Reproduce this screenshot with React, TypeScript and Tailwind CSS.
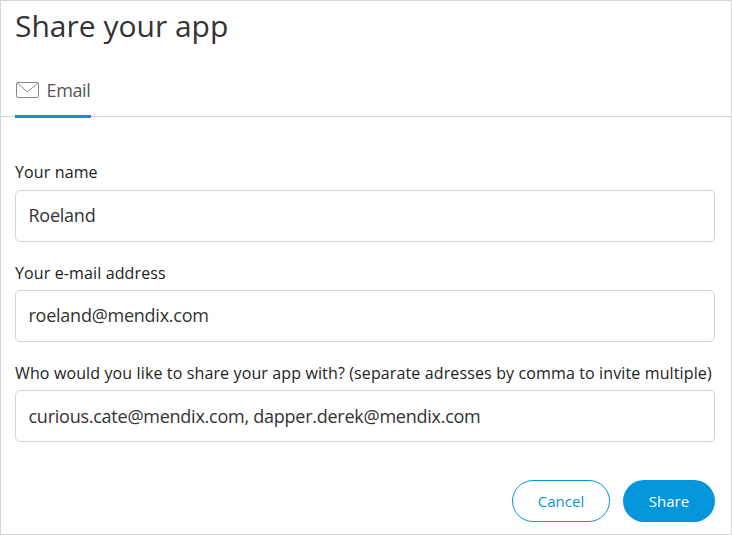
import React from "react";

type FieldProps = { label: string; value: string; spacing: string; boxClass: string };

function Field({ label, value, spacing, boxClass }: FieldProps) {
  return (
    <label className={`block ${spacing}`}>
      <span className="block h-6 whitespace-nowrap text-base leading-6 tracking-[0.128px] text-[#222]">{label}</span>
      <input
        readOnly
        value={value}
        className={`block h-[52px] w-full rounded-[5px] border border-[#d5d5d5] bg-white px-[12.5px] text-[18px] tracking-[-0.25px] text-[#333] outline-none ${boxClass}`}
      />
    </label>
  );
}

export default function App() {
  return (
    <main className="flex h-[535px] w-[732px] flex-col overflow-hidden border border-[#d5d5d5] bg-white font-['Open_Sans',sans-serif]">
      <h1 className="h-[70px] pl-3.5 pt-[5px] text-[30px] leading-[40px] text-[#333]">Share your app</h1>
      <nav className="flex h-[46px] shrink-0 border-b border-[#d5d5d5] pl-3.5">
        <button className="flex h-[47px] w-[76px] items-start gap-[7.5px] border-b-3 border-[#0595db] pl-px pt-[6px] text-[18px] leading-[26px] tracking-[-0.35px] text-[#555]">
          <svg width="23" height="16" viewBox="0 0 23 16" fill="none" stroke="#888" className="mt-[5px] shrink-0">
            <rect x="0.5" y="0.5" width="22" height="15" rx="1.5" />
            <path d="M1.2 1l9.1 8.1Q11.5 10.1 12.7 9.1L21.8 1" />
          </svg>
          <span>Email</span>
        </button>
      </nav>
      <form className="flex flex-col pl-3.5 pr-4">
        <Field label="Your name" value="Roeland" spacing="mt-[43px]" boxClass="mt-[6px] pb-[3px]" />
        <Field label="Your e-mail address" value="roeland@mendix.com" spacing="mt-[19px]" boxClass="mt-[5px] pb-[3px]" />
        <Field
          label="Who would you like to share your app with? (separate adresses by comma to invite multiple)"
          value="curious.cate@mendix.com, dapper.derek@mendix.com"
          spacing="mt-[19px]"
          boxClass="mt-[5px]"
        />
        <div className="mt-[38px] flex justify-end gap-[13px] text-[15px]">
          <button type="button" className="h-[42px] w-[98px] rounded-full border border-[#0595db] text-[#0595db]">Cancel</button>
          <button type="button" className="h-[42px] w-[92px] rounded-full bg-[#0595db] text-white">Share</button>
        </div>
      </form>
    </main>
  );
}
